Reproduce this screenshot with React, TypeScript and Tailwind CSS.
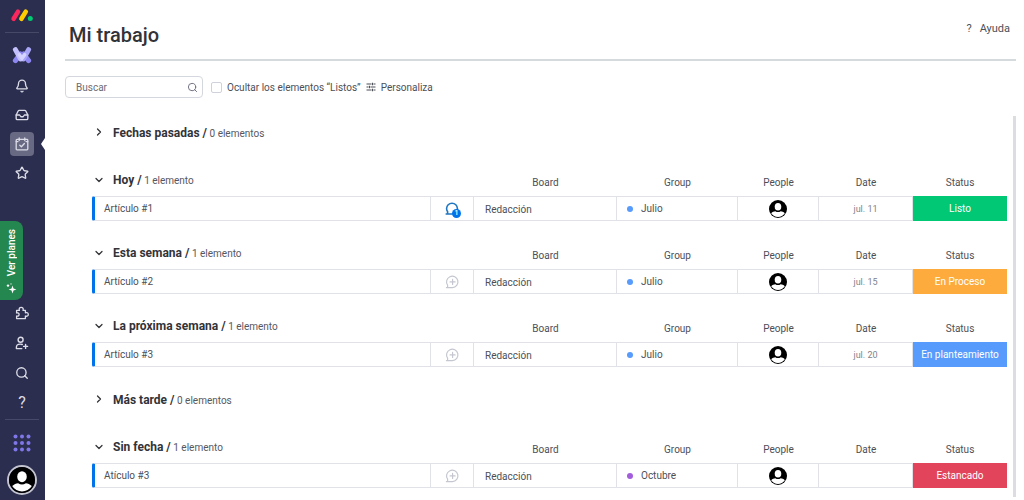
import React, { useState } from 'react';
import { Bell, Inbox, Star, Search, ChevronDown, ChevronRight } from 'lucide-react';

type Item = {
  name: string;
  board: string;
  group: string;
  dot: string;
  date: string;
  status: string;
  statusColor: string;
  updates: number;
};

type Section = { title: string; items: Item[] };

const sections: Section[] = [
  { title: 'Fechas pasadas', items: [] },
  {
    title: 'Hoy',
    items: [{ name: 'Artículo #1', board: 'Redacción', group: 'Julio', dot: 'bg-[#579bfc]', date: 'jul. 11', status: 'Listo', statusColor: 'bg-[#00c875]', updates: 1 }],
  },
  {
    title: 'Esta semana',
    items: [{ name: 'Artículo #2', board: 'Redacción', group: 'Julio', dot: 'bg-[#579bfc]', date: 'jul. 15', status: 'En Proceso', statusColor: 'bg-[#fdab3d]', updates: 0 }],
  },
  {
    title: 'La próxima semana',
    items: [{ name: 'Artículo #3', board: 'Redacción', group: 'Julio', dot: 'bg-[#579bfc]', date: 'jul. 20', status: 'En planteamiento', statusColor: 'bg-[#579bfc]', updates: 0 }],
  },
  { title: 'Más tarde', items: [] },
  {
    title: 'Sin fecha',
    items: [{ name: 'Atículo #3', board: 'Redacción', group: 'Octubre', dot: 'bg-[#a25ddc]', date: '', status: 'Estancado', statusColor: 'bg-[#e2445c]', updates: 0 }],
  },
];

function Logo() {
  return (
    <svg width="24" height="14" viewBox="0 0 24 14" fill="none" strokeLinecap="round" strokeWidth="4.6">
      <path d="M3.6 10.8L8 3.6" stroke="#fb275d" />
      <path d="M11.4 10.8L15.8 3.6" stroke="#ffcc00" />
      <circle cx="20.3" cy="10.6" r="2.5" fill="#00ca72" />
    </svg>
  );
}

function ProductMark() {
  return (
    <svg width="20" height="18" viewBox="0 0 20 18" fill="none" strokeLinecap="round" strokeWidth="5">
      <path d="M3.4 14.6L8.5 8" stroke="#8d87f2" />
      <path d="M16.6 14.6L11.5 8" stroke="#8d87f2" />
      <path d="M3.4 3.6L8.6 13" stroke="#c3c0fd" />
      <path d="M16.6 3.6L11.4 13" stroke="#a9a5f7" />
      <path d="M7.4 8.6L10 12.2L12.6 8.6" stroke="#d5d3ff" strokeWidth="3.6" />
    </svg>
  );
}

function CalendarIcon() {
  return (
    <svg width="14" height="14" viewBox="0 0 14 14" fill="none" stroke="currentColor" strokeWidth="1.3" strokeLinecap="round" strokeLinejoin="round">
      <rect x="1.2" y="2.4" width="11.6" height="10.4" rx="0.8" />
      <path d="M1.2 4.6H3M11 4.6h1.8M4.2 1v2.6M9.8 1v2.6M4.8 8.2l1.6 1.5 3-3.2" />
    </svg>
  );
}

function PuzzleIcon() {
  return (
    <svg width="14" height="14" viewBox="0 0 14 14" fill="none" stroke="currentColor" strokeWidth="1.3" strokeLinejoin="round">
      <path d="M1.6 4.4H4.4C3.7 2.7 4.7 1.3 6.2 1.3S8.7 2.7 8 4.4h2.4v2.4c1.6-.7 2.9.2 2.9 1.6s-1.3 2.3-2.9 1.6v2.6H1.6V10c1.5.5 2.5-.3 2.5-1.5S3.1 6.5 1.6 7Z" />
    </svg>
  );
}

function InviteIcon() {
  return (
    <svg width="14" height="14" viewBox="0 0 14 14" fill="none" stroke="currentColor" strokeWidth="1.4" strokeLinecap="round" strokeLinejoin="round">
      <circle cx="5.6" cy="3.7" r="2.5" />
      <path d="M6.8 12.6H1.4v-1.4c0-1.9 1.7-3.1 3.8-3.1.8 0 1.5.1 2.1.4M10.6 8.4v4M8.6 10.4h4" />
    </svg>
  );
}

function SparkleIcon() {
  return (
    <svg width="11" height="11" viewBox="0 0 11 11" fill="currentColor">
      <path d="M6.5 2.6L7.5 5.5 10.4 6.5 7.5 7.5 6.5 10.4 5.5 7.5 2.6 6.5 5.5 5.5Z" />
      <circle cx="2" cy="2.6" r="1.2" />
      <circle cx="5" cy="0.9" r="0.6" />
    </svg>
  );
}

function AppsIcon() {
  return (
    <svg width="18" height="18" viewBox="0 0 18 18" fill="#7f77e8">
      {[2.5, 9, 15.5].map((y) => [2.5, 9, 15.5].map((x) => <circle key={`${x}-${y}`} cx={x} cy={y} r="2" />))}
    </svg>
  );
}

function Person({ className }: { className: string }) {
  return (
    <svg viewBox="0 0 18 18" className={className}>
      <circle cx="9" cy="9" r="9" fill="#000" />
      <ellipse cx="9" cy="6.7" rx="3.3" ry="3.8" fill="#fff" />
      <path d="M2.2 13.2C3.5 11.8 5 11.4 6.3 11.2c1.7 1.2 3.7 1.2 5.4 0 1.3.2 2.8.6 4.1 2A8 8 0 0 1 2.2 13.2Z" fill="#fff" />
    </svg>
  );
}

function Filters() {
  return (
    <svg width="10" height="10" viewBox="0 0 10 10" fill="none" stroke="currentColor" strokeWidth="1.1">
      <path d="M0.5 2H5.5M7.5 2H9.5M6.5 0.8V3.2M0.5 5H2.5M4.5 5H9.5M3.5 3.8V6.2M0.5 8H5.5M7.5 8H9.5M6.5 6.8V9.2" />
    </svg>
  );
}

function UpdatesButton({ count }: { count: number }) {
  const active = count > 0;
  return (
    <button aria-label="Actualizaciones" className={`relative block mx-auto ${active ? 'text-[#1f76c2]' : 'text-[#c5c7d0]'}`}>
      <svg width="16" height="16" viewBox="0 0 16 16" fill="none" stroke="currentColor" strokeWidth={active ? 1.6 : 1.2} strokeLinecap="round" strokeLinejoin="round">
        {active ? (
          <path d="M8 13H2.2M3.6 13V10.600C2.900 9.800 2.600 8.700 2.600 7.600A5.400 5.400 0 0 1 13.400 7.600V9" />
        ) : (
          <path d="M8.4 13.600H2.400M3.600 13.600V11.200A5.700 5.700 0 1 1 8.400 13.600M8.600 5.400v5M6.100 7.900h5" />
        )}
      </svg>
      {active && (
        <span className="absolute left-2 top-2 w-[9px] h-[9px] rounded-full bg-[#0073ea] text-white text-[7px] leading-[9px] font-medium text-center">{count}</span>
      )}
    </button>
  );
}

function Sidebar() {
  const icon = 'w-6 h-6 flex items-center justify-center rounded';
  return (
    <nav className="w-[45px] shrink-0 h-full bg-[#2b2e4e] text-[#dcdde8] flex flex-col items-center pr-px pb-[5px]">
      <a href="#" aria-label="Inicio" className="h-8 pt-2"><Logo /></a>
      <hr className="w-[34px] border-[#474968]" />
      <a href="#" aria-label="Work management" className="mt-[13px] mb-2.5"><ProductMark /></a>

      <div className="flex flex-col gap-[5px]">
        <button aria-label="Notificaciones" className={icon}><Bell size={14} strokeWidth={2.3} /></button>
        <button aria-label="Bandeja de entrada" className={icon}><Inbox size={14} strokeWidth={2.3} /></button>
        <div className="relative">
          <button aria-label="Mi trabajo" className={`${icon} bg-[#686982]`}><CalendarIcon /></button>
          <span className="absolute left-[31px] top-1.5 border-y-[6px] border-y-transparent border-r-4 border-r-white" />
        </div>
        <button aria-label="Favoritos" className={icon}><Star size={14} strokeWidth={2.3} /></button>
      </div>

      <button className="mt-auto mb-px self-start w-[23px] h-[79px] rounded-r-lg bg-[#258750] text-white flex flex-col items-center justify-between pt-2 pb-1.5">
        <span className="[writing-mode:vertical-rl] rotate-180 text-[10px] leading-4 font-medium">Ver planes</span>
        <SparkleIcon />
      </button>

      <div className="flex flex-col gap-1.5">
        <button aria-label="Aplicaciones" className={icon}><PuzzleIcon /></button>
        <button aria-label="Invitar" className={icon}><InviteIcon /></button>
        <button aria-label="Buscar en todo" className={icon}><Search size={14} strokeWidth={2.3} /></button>
        <button aria-label="Ayuda" className={`${icon} text-base`}>?</button>
      </div>
      <hr className="mt-1 w-[34px] border-[#474968]" />
      <button aria-label="Productos" className="mt-3.5 mb-[13px]"><AppsIcon /></button>
      <button aria-label="Perfil" className="rounded-full border-2 border-[#c3c4d0]"><Person className="w-[26px] h-[26px]" /></button>
    </nav>
  );
}

function SectionTitle({ section, open, onToggle }: { section: Section; open: boolean; onToggle: () => void }) {
  const count = section.items.length;
  return (
    <button onClick={onToggle} aria-expanded={open} className="h-8 flex items-center text-left">
      <span className="w-[21px] pl-px">
        {open ? <ChevronDown size={12} strokeWidth={2.5} /> : <ChevronRight size={12} strokeWidth={2.5} />}
      </span>
      <span>
        <span className="text-[12px] font-bold">{section.title} /</span>
        <span className="text-[10px] text-[#56585f]"> {count} {count === 1 ? 'elemento' : 'elementos'}</span>
      </span>
    </button>
  );
}

function WorkSection({ section }: { section: Section }) {
  const [open, setOpen] = useState(section.items.length > 0);
  const title = <SectionTitle section={section} open={open} onToggle={() => setOpen(!open)} />;

  if (!open) return <section className="mb-4">{title}</section>;

  const head = 'p-0 pt-1.5 font-normal text-center';
  const cell = 'p-0 h-[25px] border-y border-r border-[#e1e2e8]';
  return (
    <section className="mb-4">
      <table className="w-full table-fixed border-separate border-spacing-0 text-[10px] leading-4 text-[#4d4f57]">
        <colgroup>
          <col />
          <col className="w-[43px]" />
          <col className="w-[143px]" />
          <col className="w-[121px]" />
          <col className="w-[81px]" />
          <col className="w-[94px]" />
          <col className="w-[94px]" />
        </colgroup>
        <thead>
          <tr>
            <th colSpan={2} className="p-0 font-normal text-[#323338]">{title}</th>
            <th className={head}>Board</th>
            <th className={head}>Group</th>
            <th className={head}>People</th>
            <th className={head}>Date</th>
            <th className={head}>Status</th>
          </tr>
        </thead>
        <tbody>
          {section.items.map((item) => (
            <tr key={item.name}>
              <td className={`${cell} border-l-[3px] border-l-[#0073ea] rounded-l-xs pl-[9px]`}>{item.name}</td>
              <td className={cell}><UpdatesButton count={item.updates} /></td>
              <td className={`${cell} pl-[11px] pt-0.5`}>{item.board}</td>
              <td className={cell}>
                <div className="flex items-center gap-2 pl-2.5">
                  <span className={`w-1.5 h-1.5 rounded-full ${item.dot}`} />
                  {item.group}
                </div>
              </td>
              <td className={cell}><Person className="w-[18px] h-[18px] mx-auto" /></td>
              <td className={`${cell} text-center text-[9px] text-[#80828b]`}>{item.date}</td>
              <td className={`p-0 text-center text-white ${item.statusColor}`}>{item.status}</td>
            </tr>
          ))}
        </tbody>
      </table>
    </section>
  );
}

export default function App() {
  return (
    <div className="h-screen flex overflow-hidden bg-white text-[#323338] font-['Roboto',sans-serif]">
      <Sidebar />

      <main className="flex-1 min-w-0 flex flex-col pl-5 pr-2">
        <header className="h-[61px] shrink-0 flex justify-between border-b-2 border-[#d5dadd] pl-1 pr-1.5">
          <h1 className="text-[20px] leading-7 font-medium pt-[21px]">Mi trabajo</h1>
          <a href="#" className="flex gap-2 self-start pt-[21px] text-[11px] leading-4 text-[#4d4f57]">
            <span>?</span>
            <span>Ayuda</span>
          </a>
        </header>

        <div className="mt-[15px] flex items-center gap-2 text-[10px] text-[#4d4f57]">
          <div className="w-[138px] h-[22px] flex items-center border border-[#d5d7de] rounded-sm pl-2.5 pr-1">
            <input type="search" aria-label="Buscar" placeholder="Buscar" className="flex-1 min-w-0 outline-none placeholder:text-[#6b6d76]" />
            <Search size={11} className="text-[#676879]" />
          </div>
          <div className="flex items-center gap-[5px]">
            <label className="flex items-center gap-[5px]">
              <input type="checkbox" className="appearance-none w-[11px] h-[11px] border border-[#d0d2da] rounded-xs checked:bg-[#0073ea]" />
              Ocultar los elementos “Listos”
            </label>
            <button className="flex items-center gap-[5px]">
              <Filters />
              Personaliza
            </button>
          </div>
        </div>

        <div className="mt-[18px] mb-[3px] flex-1 min-h-0 overflow-hidden border-r-[3px] border-[#dcdde0] pl-[27px] pr-1.5">
          {sections.map((section) => (
            <WorkSection key={section.title} section={section} />
          ))}
        </div>
      </main>
    </div>
  );
}
